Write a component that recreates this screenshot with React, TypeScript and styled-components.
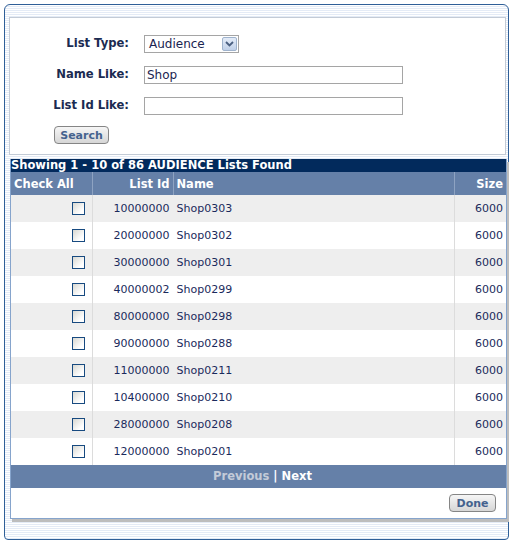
import React from 'react';
import styled, { createGlobalStyle } from 'styled-components';

const GlobalStyle = createGlobalStyle`
  body {
    margin: 0;
    background: #ffffff;
    font-family: "DejaVu Sans", Verdana, sans-serif;
    font-size: 11px;
  }
`;

const Frame = styled.div`
  box-sizing: border-box;
  margin: 4px 0 0 4px;
  width: 505px;
  height: 536px;
  border: 1px solid #2f5f98;
  border-radius: 6px 6px 4px 4px;
  background: repeating-linear-gradient(#ffffff 0 1px, #e4ebf6 1px 2px);
  padding-top: 12px;
`;

const SearchPanel = styled.div`
  box-sizing: border-box;
  margin-left: 4px;
  width: 497px;
  height: 138px;
  background: #ffffff;
  border: 1px solid #c3cbd6;
  padding: 17px 0 0 0;
`;

const FormGrid = styled.div`
  display: grid;
  grid-template-columns: 119px auto;
  column-gap: 15px;
  row-gap: 13px;
  align-items: center;
`;

const Label = styled.label`
  text-align: right;
  font-weight: bold;
  font-size: 11.6px;
  color: #1b2b52;
  line-height: 18px;
  position: relative;
  top: -1px;
`;

const TextBox = styled.div<{ $w: number }>`
  box-sizing: border-box;
  width: ${(p) => p.$w}px;
  height: 18px;
  border: 1px solid #a5a5a5;
  background: #ffffff;
  color: #1a2450;
  font-size: 12px;
  line-height: 16px;
  padding-left: 2px;
`;

const Select = styled.div`
  box-sizing: border-box;
  width: 95px;
  height: 18px;
  border: 1px solid #a5a5a5;
  display: flex;
  align-items: center;
  justify-content: space-between;
  padding: 0 1px 0 4px;
  color: #1a2450;
  font-size: 12px;
`;

const SelectArrow = styled.div`
  box-sizing: border-box;
  width: 15px;
  height: 14px;
  border: 1px solid #9fb3cd;
  border-radius: 2px;
  background: linear-gradient(#e4ecf8, #c0d0e8);
  display: flex;
  align-items: center;
  justify-content: center;
`;

const Button = styled.button<{ $w: number }>`
  box-sizing: border-box;
  width: ${(p) => p.$w}px;
  height: 18px;
  border: 1px solid #858585;
  border-radius: 4px;
  background: linear-gradient(#f6f6f6, #d6d6d6);
  color: #44628e;
  font-family: "DejaVu Sans", Verdana, sans-serif;
  font-size: 11px;
  font-weight: bold;
  padding: 0;
  line-height: 15px;
`;

const SearchRow = styled.div`
  margin: 11px 0 0 44px;
`;

const Results = styled.div`
  box-sizing: border-box;
  margin: 4px 0 0 5px;
  width: 497px;
  background: #ffffff;
  border: 1px solid #86a4cc;
  border-top: none;
  box-shadow: 2px 3px 0 #bdbdbd;
`;

const TitleBar = styled.div`
  height: 13px;
  line-height: 13px;
  background: #022a5c;
  color: #ffffff;
  font-weight: bold;
  font-size: 11.5px;
  white-space: nowrap;
  overflow: hidden;
`;

const Table = styled.table`
  width: 100%;
  border-collapse: collapse;
  table-layout: fixed;
`;

const Col = styled.col<{ $w?: number }>`
  width: ${(p) => (p.$w ? `${p.$w}px` : 'auto')};
`;

const Th = styled.th<{ $align: string }>`
  height: 23px;
  padding: 0 3px;
  background: #6580a8;
  color: #ffffff;
  font-size: 11.5px;
  font-weight: bold;
  text-align: ${(p) => p.$align};
  border-left: 1px solid #8ea3c2;
  &:first-child {
    border-left: none;
  }
`;

const Tr = styled.tr<{ $odd: boolean }>`
  background: ${(p) => (p.$odd ? '#eeeeee' : '#ffffff')};
`;

const Td = styled.td<{ $align: string; $line?: boolean }>`
  height: 27px;
  padding: 0 3px;
  color: #1a2a5c;
  text-align: ${(p) => p.$align};
  border-left: 1px solid ${(p) => (p.$line ? '#dcdcdc' : 'transparent')};
  &:first-child {
    border-left: none;
  }
`;

const Check = styled.span`
  display: inline-block;
  box-sizing: border-box;
  width: 13px;
  height: 13px;
  margin-right: 4px;
  vertical-align: middle;
  border: 1px solid #174a80;
  background: linear-gradient(135deg, #d8d8d2, #ffffff 75%);
`;

const Pager = styled.div`
  height: 23px;
  line-height: 23px;
  background: #6580a8;
  color: #ffffff;
  font-weight: bold;
  text-align: center;
  font-size: 11.5px;
  padding-left: 8px;
`;

const PagerLink = styled.span<{ $off?: boolean }>`
  color: ${(p) => (p.$off ? '#c3cbd8' : '#ffffff')};
`;

const Footer = styled.div`
  height: 30px;
  display: flex;
  justify-content: flex-end;
  padding: 6px 10px 0 0;
  box-sizing: border-box;
`;

const rows = [
  ['10000000', 'Shop0303'],
  ['20000000', 'Shop0302'],
  ['30000000', 'Shop0301'],
  ['40000002', 'Shop0299'],
  ['80000000', 'Shop0298'],
  ['90000000', 'Shop0288'],
  ['11000000', 'Shop0211'],
  ['10400000', 'Shop0210'],
  ['28000000', 'Shop0208'],
  ['12000000', 'Shop0201'],
];

const App: React.FC = () => {
  return (
    <>
      <GlobalStyle />
      <Frame>
        <SearchPanel>
          <FormGrid>
            <Label>List Type:</Label>
            <Select>
              <span>Audience</span>
              <SelectArrow>
                <svg width="9" height="6" viewBox="0 0 9 6">
                  <path d="M1 1 L4.5 4.5 L8 1" fill="none" stroke="#4a5f80" strokeWidth="1.8" />
                </svg>
              </SelectArrow>
            </Select>
            <Label>Name Like:</Label>
            <TextBox $w={259}>Shop</TextBox>
            <Label>List Id Like:</Label>
            <TextBox $w={259} />
          </FormGrid>
          <SearchRow>
            <Button $w={55}>Search</Button>
          </SearchRow>
        </SearchPanel>
        <Results>
          <TitleBar>Showing 1 - 10 of 86 AUDIENCE Lists Found</TitleBar>
          <Table>
            <colgroup>
              <Col $w={81} />
              <Col $w={81} />
              <Col />
              <Col $w={52} />
            </colgroup>
            <thead>
              <tr>
                <Th $align="left">Check All</Th>
                <Th $align="right">List Id</Th>
                <Th $align="left">Name</Th>
                <Th $align="right">Size</Th>
              </tr>
            </thead>
            <tbody>
              {rows.map(([id, name], i) => (
                <Tr key={id} $odd={i % 2 === 0}>
                  <Td $align="right"><Check /></Td>
                  <Td $align="right" $line>{id}</Td>
                  <Td $align="left">{name}</Td>
                  <Td $align="right" $line>6000</Td>
                </Tr>
              ))}
            </tbody>
          </Table>
          <Pager>
            <PagerLink $off>Previous</PagerLink> | <PagerLink>Next</PagerLink>
          </Pager>
          <Footer>
            <Button $w={47}>Done</Button>
          </Footer>
        </Results>
      </Frame>
    </>
  );
};

export default App;
